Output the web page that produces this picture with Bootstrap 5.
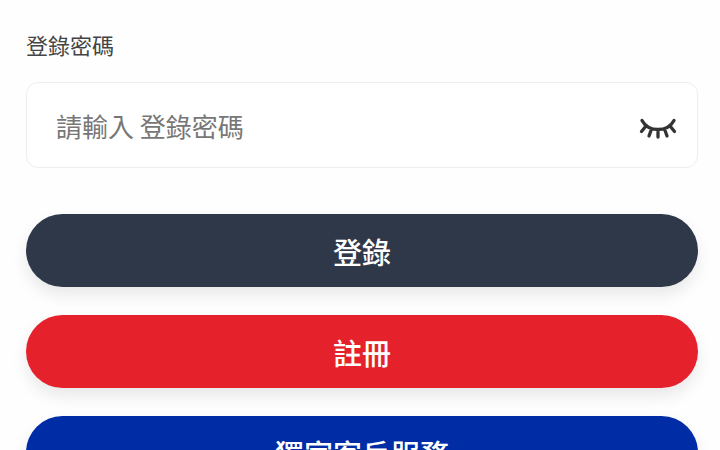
<!DOCTYPE html>
<html lang="zh-Hant">
<head>
<meta charset="utf-8">
<meta name="viewport" content="width=device-width, initial-scale=1">
<title>登錄</title>
<link href="https://cdn.jsdelivr.net/npm/bootstrap@5.3.0/dist/css/bootstrap.min.css" rel="stylesheet">
<style>
  body { font-family: "Noto Sans CJK TC", sans-serif; background: #fefefe; }
  .login-form { padding: 28px 22px 24px 26px; }
  .field-label { font-size: 22px; line-height: 32px; color: #444; margin-bottom: 22px; }
  .password-box { border: 1px solid #eee; border-radius: 12px; background: #fff; margin-bottom: 46px; padding-right: 20px; }
  .password-box .form-control { font-size: 26px; line-height: 36px; padding: 25px 12px 23px 29px; color: #333; }
  .password-box .form-control::placeholder { color: #777; }
  .actions { gap: 28px; }
  .btn-action { font-size: 29px; font-weight: 500; line-height: 43px; padding: 16px 24px 14px; border: 0; color: #fff; box-shadow: 0 8px 16px rgba(0, 0, 0, .09); }
  .btn-action:hover { color: #fff; }
  .btn-login, .btn-login:hover { background: #2f3848; }
  .btn-register, .btn-register:hover { background: #e5222c; }
  .btn-service, .btn-service:hover { background: #002ca5; }
</style>
</head>
<body class="vh-100 overflow-hidden">
<form class="login-form">
  <label class="field-label d-block" for="password">登錄密碼</label>
  <div class="password-box d-flex align-items-center">
    <input class="form-control border-0 bg-transparent shadow-none" type="password" id="password" placeholder="請輸入 登錄密碼">
    <button class="btn border-0 p-0 d-flex flex-shrink-0 mt-2" type="button" aria-label="顯示密碼">
      <svg width="38" height="22" viewBox="0 0 38 22" fill="none" stroke="#333" stroke-width="3.300" stroke-linecap="round" aria-hidden="true">
        <path d="M3 2.500C6 8 12 11.500 19 11.500S32 8 35 2.500M7 8L2.500 13.500M12.500 11L10 18M19 12V19M25.500 11L28 18M31 8L35.500 13.500"/>
      </svg>
    </button>
  </div>
  <div class="actions d-grid">
    <button class="btn btn-action btn-login rounded-pill" type="submit">登錄</button>
    <button class="btn btn-action btn-register rounded-pill" type="button">註冊</button>
    <button class="btn btn-action btn-service rounded-pill" type="button">獨家客戶服務</button>
  </div>
</form>
<script src="https://cdn.jsdelivr.net/npm/bootstrap@5.3.0/dist/js/bootstrap.bundle.min.js"></script>
</body>
</html>
